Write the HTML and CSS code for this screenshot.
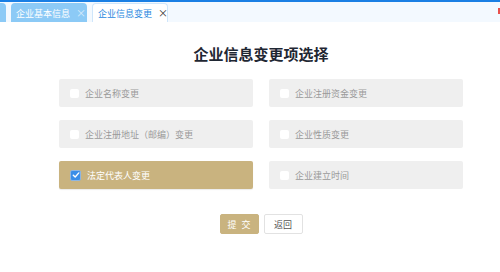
FILE: index.html
```html
<!DOCTYPE html>
<html>
<head>
<meta charset="utf-8">
<link rel="stylesheet" href="styles.css">
</head>
<body>
    <div class="topline"></div>
    <div class="tabbar">
        <div class="tab tab-cut"></div>
        <div class="tab">企业基本信息 <span class="close">×</span></div>
        <div class="tab active">企业信息变更 <span class="close">×</span></div>
        <div class="marker"></div>
    </div>

    <div class="content">
        <h1 class="title">企业信息变更项选择</h1>
        <div class="options">
            <label class="option"><span class="box"></span>企业名称变更</label>
            <label class="option"><span class="box"></span>企业注册资金变更</label>
            <label class="option"><span class="box"></span>企业注册地址（邮编）变更</label>
            <label class="option"><span class="box"></span>企业性质变更</label>
            <label class="option checked"><span class="box">
                <svg width="8" height="8" viewBox="0 0 8 8"><path d="M1.3 4.2 L3.2 6 L6.8 1.9" fill="none" stroke="#fff" stroke-width="1.4" stroke-linecap="round" stroke-linejoin="round"/></svg>
            </span>法定代表人变更</label>
            <label class="option"><span class="box"></span>企业建立时间</label>
        </div>
        <div class="buttons">
            <button class="btn btn-primary">提 交</button>
            <button class="btn">返回</button>
        </div>
    </div>
</body>
</html>
```

FILE: styles.css
```css
body {
    margin: 0;
    font-family: "Noto Sans CJK SC", "Noto Sans", sans-serif;
    background: #ffffff;
}

.topline {
    height: 2px;
    background-color: #1a7fe4;
}

.tabbar {
    height: 20px;
    background-color: #f3f9ff;
    display: flex;
    align-items: flex-end;
    gap: 5px;
}

.tab {
    height: 19px;
    box-sizing: border-box;
    width: 76px;
    padding-left: 5px;
    border-radius: 4px 4px 0 0;
    background-color: #8ccaf6;
    color: #ffffff;
    font-size: 9px;
    line-height: 19px;
    white-space: nowrap;
}

.tab-cut {
    width: 6px;
    padding: 0;
    border-radius: 0 4px 0 0;
}

.tab .close {
    margin-left: 4px;
    font-size: 10px;
    color: #d8ecfc;
}

.tab.active {
    background-color: #ffffff;
    border: 1px solid #cfe6fb;
    border-bottom: 0;
    color: #2a89e0;
    line-height: 18px;
}

.tab.active .close {
    color: #333333;
}

.marker {
    margin-left: auto;
    align-self: flex-start;
    margin-top: 6px;
    width: 2px;
    height: 6px;
    background-color: #e8504c;
}

.content {
    width: 404px;
    margin-left: 59px;
}

.title {
    margin: 22px 0 0;
    text-align: center;
    font-size: 15px;
    line-height: 20px;
    font-weight: bold;
    color: #1f2733;
}

.options {
    margin-top: 15px;
    display: grid;
    grid-template-columns: 194px 194px;
    grid-auto-rows: 28px;
    gap: 13px 16px;
}

.option {
    display: flex;
    align-items: center;
    padding-left: 11px;
    background-color: #efefef;
    border-radius: 2px;
    color: #9a9a9a;
    font-size: 9px;
}

.box {
    width: 9px;
    height: 9px;
    margin-right: 6px;
    border-radius: 2px;
    background-color: #ffffff;
    display: flex;
    align-items: center;
    justify-content: center;
}

.option.checked {
    background-color: #c9b37f;
    color: #ffffff;
    box-shadow: 0 1px 1px rgba(0, 0, 0, 0.08);
}

.option.checked .box {
    background-color: #3a8ee8;
    border: 1px solid #8fb6e0;
}

.buttons {
    margin-top: 25px;
    display: flex;
    justify-content: center;
    gap: 5px;
}

.btn {
    height: 20px;
    width: 39px;
    padding: 0;
    border: 1px solid #e2e2e2;
    border-radius: 2px;
    background-color: #ffffff;
    color: #555555;
    font-family: "Noto Sans CJK SC", sans-serif;
    font-size: 9px;
}

.btn-primary {
    background-color: #c9b37f;
    border-color: #c9b37f;
    color: #ffffff;
    word-spacing: 3px;
}
```
